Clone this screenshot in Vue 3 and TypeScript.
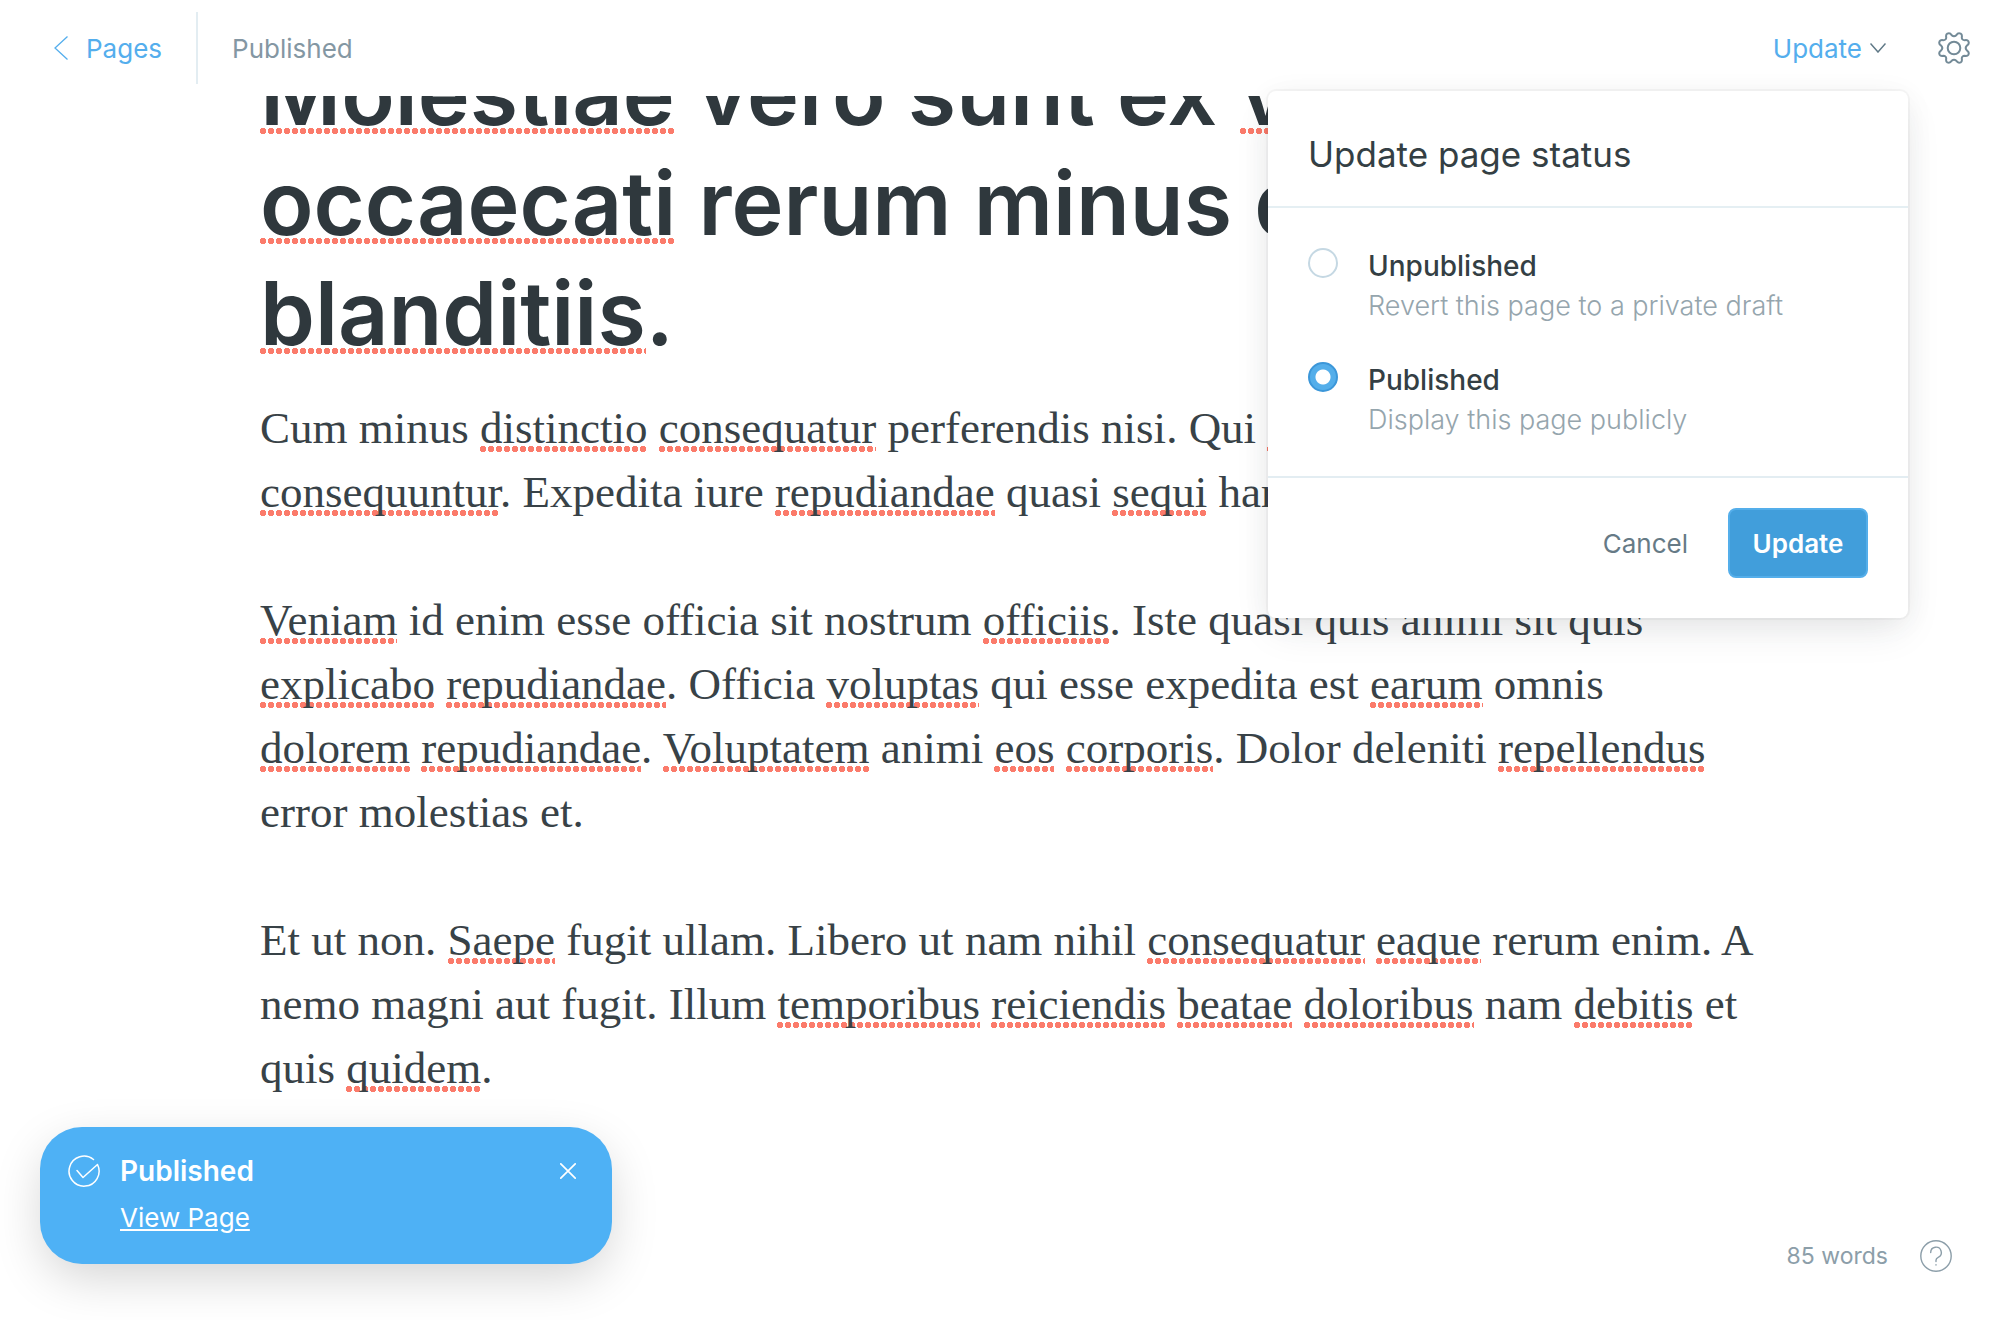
<script setup lang="ts">
import { ref } from 'vue'

type Status = 'unpublished' | 'published'
interface Piece { text: string; flagged: boolean }

const status = ref<Status>('published')

const options: { value: Status; label: string; hint: string }[] = [
  { value: 'unpublished', label: 'Unpublished', hint: 'Revert this page to a private draft' },
  { value: 'published', label: 'Published', hint: 'Display this page publicly' },
]

// Words wrapped in asterisks are flagged by the spelling checker.
const parse = (line: string): Piece[] =>
  line
    .split('*')
    .map((text, i) => ({ text, flagged: i % 2 === 1 }))
    .filter((piece) => piece.text !== '')

const titleLines = [
  '*Molestiae* vero sunt ex *voluptas*',
  '*occaecati* rerum minus dolor',
  '*blanditiis*.',
].map(parse)

const paragraphs = [
  [
    'Cum minus *distinctio* *consequatur* perferendis nisi. Qui *eos*',
    '*consequuntur*. Expedita iure *repudiandae* quasi *sequi* harum.',
  ],
  [
    '*Veniam* id enim esse officia sit nostrum *officiis*. Iste quasi quis animi sit quis',
    '*explicabo* *repudiandae*. Officia *voluptas* qui esse expedita est *earum* omnis',
    '*dolorem* *repudiandae*. *Voluptatem* animi *eos* *corporis*. Dolor deleniti *repellendus*',
    'error molestias et.',
  ],
  [
    'Et ut non. *Saepe* fugit ullam. Libero ut nam nihil *consequatur* *eaque* rerum enim. A',
    'nemo magni aut fugit. Illum *temporibus* *reiciendis* *beatae* *doloribus* nam *debitis* et',
    'quis *quidem*.',
  ],
].map((lines) => lines.map(parse))
</script>

<template>
  <div class="editor">
    <header class="bar">
      <a class="back" href="#pages">
        <svg class="back-icon" viewBox="0 0 14 24" fill="none" stroke="currentColor" stroke-width="1.3"><path d="M13.500 .5 1 12l12.500 11.500" /></svg>
        Pages
      </a>
      <span class="state">Published</span>
      <button class="trigger" type="button">
        Update
        <svg class="chevron" viewBox="0 0 16 10" fill="none" stroke="#5f7886" stroke-width="1.5"><path d="m.5 .5 7.500 8.500L15.500 .5" /></svg>
      </button>
      <button class="gear" type="button" aria-label="Settings">
        <svg viewBox="0 0 32 32" fill="none" stroke="currentColor" stroke-width="2" stroke-linejoin="round">
          <circle cx="16" cy="16" r="6.300" />
          <path d="M13.700 3.200Q12 .4 9.300 1.600 7.700 2.500 8.200 5.200 8.400 8 5.200 8.200 2.500 7.700 1.600 9.300.4 12 3.200 13.700 5.400 16 3.200 18.300.4 20 1.600 22.700 2.500 24.300 5.200 23.800 8.400 24 8.200 26.800 7.700 29.500 9.300 30.400 12 31.600 13.700 28.800 16 26.600 18.300 28.800 20 31.600 22.700 30.400 24.300 29.500 23.800 26.800 23.600 24 26.800 23.800 29.500 24.300 30.400 22.700 31.600 20 28.800 18.300 26.600 16 28.800 13.700 31.600 12 30.400 9.300 29.500 7.700 26.800 8.200 23.600 8 23.800 5.200 24.300 2.500 22.700 1.600 20 .4 18.300 3.200 16 5.400 13.700 3.200Z" />
        </svg>
      </button>

      <form class="menu" @submit.prevent>
        <h2 class="menu-title">Update page status</h2>
        <div class="options">
          <label v-for="o in options" :key="o.value" class="option">
            <input v-model="status" class="radio" type="radio" name="status" :value="o.value" />
            <span class="option-text">
              <span class="option-label">{{ o.label }}</span>
              <span class="option-hint">{{ o.hint }}</span>
            </span>
          </label>
        </div>
        <div class="actions">
          <button class="cancel" type="button">Cancel</button>
          <button class="submit" type="submit">Update</button>
        </div>
      </form>
    </header>

    <main class="canvas">
      <article class="article">
        <h1 class="title">
          <span v-for="(line, i) in titleLines" :key="i" class="line"><span v-for="(p, j) in line" :key="j" :class="{ flagged: p.flagged }">{{ p.text }}</span></span>
        </h1>
        <p v-for="(lines, k) in paragraphs" :key="k" class="para">
          <span v-for="(line, i) in lines" :key="i" class="line"><span v-for="(p, j) in line" :key="j" :class="{ flagged: p.flagged }">{{ p.text }}</span></span>
        </p>
      </article>
    </main>

    <aside class="toast" role="status">
      <svg class="toast-check" viewBox="0 0 32 32" fill="none" stroke="currentColor" stroke-width="1.500" stroke-linecap="round" stroke-linejoin="round">
        <path d="M25.500 4.500A15 15 0 1 0 29.500 9.500L15 22.500l-6-7" />
      </svg>
      <div class="toast-body">
        <strong class="toast-title">Published</strong>
        <a class="toast-link" href="#view">View Page</a>
      </div>
      <button class="toast-close" type="button" aria-label="Close">
        <svg viewBox="0 0 16 16" fill="none" stroke="currentColor" stroke-width="1.700" stroke-linecap="round"><path d="m.8 .8 14.400 14.400M15.200 .8.8 15.200" /></svg>
      </button>
    </aside>

    <footer class="foot">
      <span>85 words</span>
      <button class="help" type="button" aria-label="Help">
        <svg viewBox="0 0 32 32" fill="none" stroke="currentColor" stroke-width="1.400" stroke-linecap="round">
          <circle cx="16" cy="16" r="15.200" />
          <path d="M10.700 12.500a5.300 5.300 0 1 1 7.500 4.800c-1.600.7-2.200 1.600-2.200 3v1.200M16 24.800v.3" />
        </svg>
      </button>
    </footer>
  </div>
</template>

<style>
body {
  background: #fff;
}
</style>

<style scoped>
.editor {
  position: relative;
  display: flex;
  flex-direction: column;
  height: 100vh;
  overflow: hidden;
  color: #394047;
  font-family: Inter, "Liberation Sans", sans-serif;
  font-size: 26px;
}
button {
  padding: 0;
  border: 0;
  background: none;
  color: inherit;
  font: inherit;
  cursor: pointer;
}
svg {
  display: block;
}

.bar {
  position: relative;
  z-index: 2;
  display: flex;
  align-items: center;
  flex: none;
  box-sizing: border-box;
  height: 96px;
  padding: 0 30px 0 54px;
  background: #fff;
}
.back {
  display: flex;
  align-items: center;
  gap: 18px;
  height: 72px;
  padding-right: 34px;
  border-right: 2px solid #e3edf2;
  color: #54aeed;
  text-decoration: none;
}
.back-icon {
  width: 14px;
  height: 24px;
}
.state {
  margin-left: 34px;
  color: #8497a3;
}
.trigger {
  display: flex;
  align-items: center;
  gap: 8px;
  margin-left: auto;
  color: #54aeed;
}
.chevron {
  width: 16px;
  height: 10px;
}
.gear {
  margin-left: 52px;
  color: #738a97;
}
.gear svg {
  width: 32px;
  height: 32px;
}

.menu {
  position: absolute;
  top: 91px;
  right: 92px;
  width: 640px;
  border-radius: 8px;
  background: #fff;
  box-shadow: 0 0 0 2px rgba(0, 0, 0, 0.03), 0 16px 40px -6px rgba(40, 50, 60, 0.1), 0 4px 30px rgba(0, 0, 0, 0.05);
}
.menu-title {
  margin: 0;
  padding: 43px 40px 32px;
  border-bottom: 2px solid #e5eff3;
  color: #343f44;
  font-size: 35px;
  font-weight: 400;
  line-height: 40px;
}
.options {
  display: flex;
  flex-direction: column;
  gap: 36px;
  padding: 40px 40px 36px;
}
.option {
  display: flex;
  gap: 30px;
}
.radio {
  flex: none;
  appearance: none;
  box-sizing: border-box;
  width: 30px;
  height: 30px;
  margin: 0;
  border: 2px solid #c5d8e3;
  border-radius: 50%;
  background: #fff;
}
.radio:checked {
  border-color: #3c97d9;
  background: radial-gradient(circle, #fff 7px, #54aeea 8px);
}
.option-text {
  display: flex;
  flex-direction: column;
  margin-top: -2px;
  line-height: 40px;
}
.option-label {
  color: #343f44;
  font-size: 28px;
  font-weight: 500;
}
.option-hint {
  color: #95a5ad;
  font-size: 27px;
  font-weight: 300;
}
.actions {
  display: flex;
  align-items: center;
  justify-content: flex-end;
  gap: 40px;
  padding: 30px 40px 40px;
  border-top: 2px solid #e3edf2;
}
.cancel {
  color: #667a86;
}
.submit {
  box-sizing: border-box;
  width: 140px;
  height: 70px;
  border: 2px solid #54aeea;
  border-radius: 8px;
  background: #419edb;
  color: #fff;
  font-weight: 600;
}

.canvas {
  flex: 1;
  min-height: 0;
  overflow: hidden;
}
.article {
  width: 74%;
  margin: -58px auto 0;
}
.line {
  display: block;
  white-space: pre;
}
.title {
  margin: 0 0 28px;
  color: #2f383d;
  font-size: 88px;
  font-weight: 600;
  line-height: 110px;
}
.para {
  margin: 0 0 64px;
  color: #384247;
  font-family: "Liberation Serif", serif;
  font-size: 45px;
  line-height: 64px;
}
.flagged {
  background: radial-gradient(circle, #fb7b6b 2px, #fb7b6b 3px, transparent 3px) -1px calc(100% - 1px) / 8px 6px repeat-x;
}
.title .flagged {
  background-position-y: calc(100% - 12px);
}

.toast {
  position: absolute;
  bottom: 56px;
  left: 40px;
  z-index: 3;
  display: flex;
  align-items: flex-start;
  box-sizing: border-box;
  width: 572px;
  padding: 24px 36px 26px 28px;
  border-radius: 42px;
  background: #4eb1f5;
  color: #fff;
  box-shadow: 0 16px 50px -4px rgba(0, 0, 0, 0.18);
}
.toast-check {
  width: 32px;
  height: 32px;
  margin-top: 4px;
}
.toast-body {
  display: flex;
  flex: 1;
  flex-direction: column;
  gap: 7px;
  margin-left: 20px;
  line-height: 40px;
}
.toast-title {
  font-size: 28px;
  font-weight: 600;
}
.toast-link {
  align-self: flex-start;
  color: inherit;
}
.toast-close {
  margin-top: 12px;
}
.toast-close svg {
  width: 16px;
  height: 16px;
}

.foot {
  position: absolute;
  right: 48px;
  bottom: 48px;
  display: flex;
  align-items: center;
  gap: 32px;
  color: #8c9ea9;
  font-size: 23px;
}
.help svg {
  width: 32px;
  height: 32px;
}
</style>
